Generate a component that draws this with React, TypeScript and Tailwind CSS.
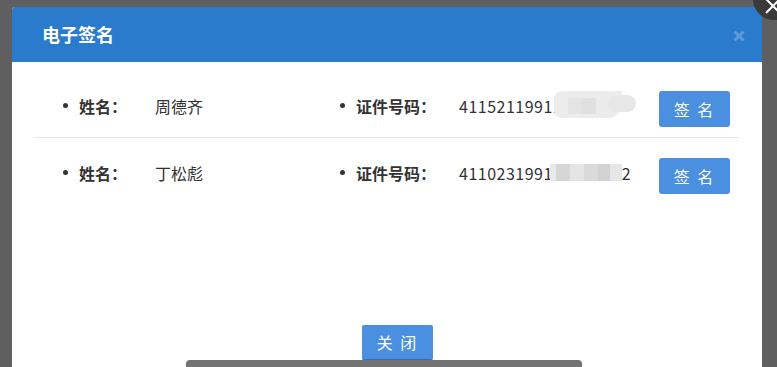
import React from 'react';

const font = { fontFamily: '"Microsoft YaHei", "Noto Sans CJK SC", "Noto Sans", sans-serif' };

type Person = { name: string; idHead: string; idTail?: string; blur: 'blob' | 'blocks' };

const people: Person[] = [
  { name: '周德齐', idHead: '41152119911', blur: 'blob' },
  { name: '丁松彪', idHead: '4110231991', idTail: '2', blur: 'blocks' },
];

const Blur = ({ kind }: { kind: 'blob' | 'blocks' }) => {
  if (kind === 'blob') {
    return (
      <span className="relative inline-block w-[82px] h-[27px] -ml-[8px] -mt-[2px]">
        <span className="absolute left-0 top-0 w-[68px] h-[27px] rounded-l-[8px] rounded-br-[14px] bg-[#ececec]" />
        <span className="absolute left-[14px] top-[7px] w-[14px] h-[16px] bg-[#e4e4e4]" />
        <span className="absolute left-[28px] top-[7px] w-[14px] h-[16px] bg-[#e0e0e0]" />
        <span className="absolute left-[42px] top-[7px] w-[14px] h-[14px] bg-[#ebebeb]" />
        <span className="absolute left-[54px] top-[4px] w-[28px] h-[17px] rounded-full bg-[#e7e7e7]" />
      </span>
    );
  }
  return (
    <span className="inline-flex h-[17px] -ml-[3px]">
      <span className="w-[6px] bg-[#e9e9e9]" />
      <span className="w-[14px] bg-[#d6d6d6]" />
      <span className="w-[14px] bg-[#e4e4e4]" />
      <span className="w-[14px] bg-[#dadada]" />
      <span className="w-[12px] bg-[#d2d2d2]" />
      <span className="w-[12px] bg-[#e6e6e6]" />
    </span>
  );
};

const Row = ({ p, last }: { p: Person; last: boolean }) => (
  <li className={`flex items-center pt-[20px] pb-[10px] pl-[29px] ${last ? '' : 'border-b border-[#e5e5e5]'}`}>
    <div className="flex items-center pb-[7px] text-[16px] text-[#333] leading-[24px]">
      <span className="w-[16px] flex items-center">
        <span className="w-[5px] h-[5px] rounded-full bg-[#333]" />
      </span>
      <span className="w-[76px] font-bold">姓名：</span>
      <span className="w-[185px]">{p.name}</span>
      <span className="w-[16px] flex items-center">
        <span className="w-[5px] h-[5px] rounded-full bg-[#333]" />
      </span>
      <span className="w-[103px] font-bold">证件号码：</span>
      <span className="w-[200px] whitespace-nowrap flex items-center tracking-[0.5px]">
        <span>{p.idHead}</span>
        <Blur kind={p.blur} />
        {p.idTail && <span>{p.idTail}</span>}
      </span>
    </div>
    <button className="w-[71px] h-[36px] rounded-[3px] bg-[#4a8fe0] text-white text-[16px] tracking-[2px]">
      签 名
    </button>
  </li>
);

export default function App() {
  return (
    <div className="relative w-[777px] h-[367px] overflow-hidden bg-[#5f5f5f]" style={font}>
      <div className="ml-[12px] pt-[7px] w-[750px] h-full">
        <div className="h-full flex flex-col bg-white rounded-t-[3px] overflow-hidden">
          {/* header */}
          <div className="h-[55px] shrink-0 bg-[#2a7bcb] flex items-center justify-between pl-[30px] pr-[17px]">
            <span className="text-white text-[18px] font-bold">电子签名</span>
            <svg width="12" height="12" viewBox="0 0 12 12" className="mt-[2px]">
              <path d="M1.5 1.5 L10.5 10.5 M10.5 1.5 L1.5 10.5" stroke="#5d9bdc" strokeWidth="3" />
            </svg>
          </div>

          {/* body */}
          <div className="flex-1 flex flex-col">
            <ul className="ml-[22px] mr-[23px] pt-[9px]">
              {people.map((p, i) => (
                <Row key={i} p={p} last={i === people.length - 1} />
              ))}
            </ul>
            <div className="mt-auto pl-[350px] mb-[7px]">
              <button className="w-[71px] h-[35px] rounded-[2px] bg-[#4a8fe0] border-b border-[#2f6fc0] text-white text-[16px] tracking-[2px]">
                关 闭
              </button>
            </div>
          </div>
        </div>
      </div>

      {/* layer close button */}
      <div className="absolute left-[753px] top-[-22px] w-[44px] h-[42px] rounded-full bg-[#3a3a3a] flex items-center justify-center">
        <svg width="18" height="18" viewBox="0 0 18 18" className="-ml-[4px] mt-[14px]">
          <path d="M2 2 L16 16 M16 2 L2 16" stroke="#fff" strokeWidth="2" />
        </svg>
      </div>

      {/* bottom scroll bar */}
      <div className="absolute left-[186px] top-[360px] w-[396px] h-[10px] rounded-t-[4px] bg-[#737373]" />
    </div>
  );
}
